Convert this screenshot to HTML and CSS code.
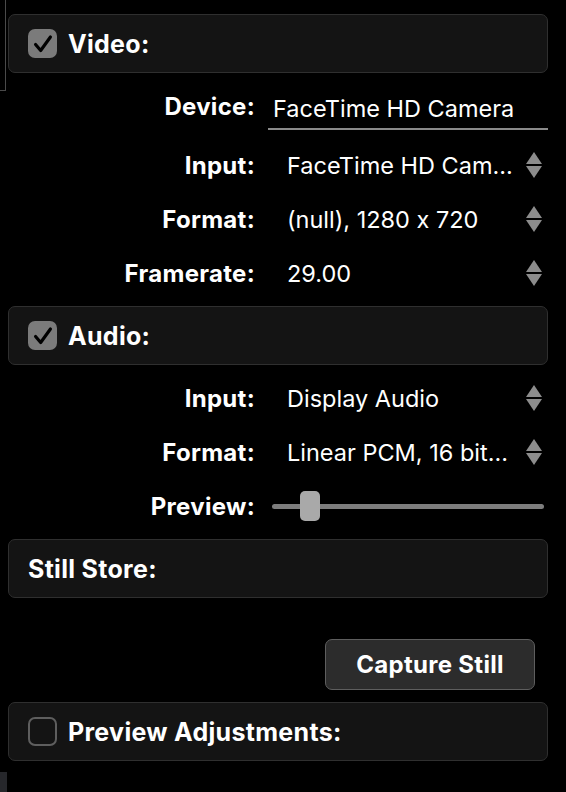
FILE: index.html
```html
<!DOCTYPE html>
<html>
<head>
<meta charset="utf-8">
<link rel="stylesheet" href="styles.css">
</head>
<body>
<div class="page">
  <div class="bracket"></div>
  <div class="tab"></div>

  <div class="group">
    <span class="check on"><svg viewBox="0 0 28 28"><path d="M6 14.5 L11.5 21 L22 6.5" /></svg></span>
    <span class="gtitle">Video:</span>
  </div>

  <div class="rows first">
    <div class="row">
      <div class="label">Device:</div>
      <div class="field">FaceTime HD Camera</div>
    </div>
    <div class="row">
      <div class="label">Input:</div>
      <div class="popup"><span class="val">FaceTime HD Cam...</span><span class="stepper"><i class="up"></i><i class="down"></i></span></div>
    </div>
    <div class="row">
      <div class="label">Format:</div>
      <div class="popup"><span class="val">(null), 1280 x 720</span><span class="stepper"><i class="up"></i><i class="down"></i></span></div>
    </div>
    <div class="row">
      <div class="label">Framerate:</div>
      <div class="popup"><span class="val">29.00</span><span class="stepper"><i class="up"></i><i class="down"></i></span></div>
    </div>
  </div>

  <div class="group">
    <span class="check on"><svg viewBox="0 0 28 28"><path d="M6 14.5 L11.5 21 L22 6.5" /></svg></span>
    <span class="gtitle">Audio:</span>
  </div>

  <div class="rows">
    <div class="row">
      <div class="label">Input:</div>
      <div class="popup"><span class="val">Display Audio</span><span class="stepper"><i class="up"></i><i class="down"></i></span></div>
    </div>
    <div class="row">
      <div class="label">Format:</div>
      <div class="popup"><span class="val">Linear PCM, 16 bit...</span><span class="stepper"><i class="up"></i><i class="down"></i></span></div>
    </div>
    <div class="row">
      <div class="label">Preview:</div>
      <div class="slider"><div class="track"></div><div class="knob"></div></div>
    </div>
  </div>

  <div class="group">
    <span class="gtitle">Still Store:</span>
  </div>

  <div class="btnrow">
    <button class="btn">Capture Still</button>
  </div>

  <div class="group">
    <span class="check"></span>
    <span class="gtitle">Preview Adjustments:</span>
  </div>
</div>
</body>
</html>
```

FILE: styles.css
```css
html, body {
  margin: 0;
  padding: 0;
  background: #000;
}
body {
  width: 566px;
  height: 792px;
  overflow: hidden;
  font-family: Inter, "Liberation Sans", sans-serif;
  font-feature-settings: "calt" 0;
  color: #fff;
}
.page {
  position: relative;
  padding: 14px 18px 0 8px;
  display: flex;
  flex-direction: column;
}
.bracket {
  position: absolute;
  left: 0;
  top: 0;
  width: 5px;
  height: 90px;
  border-right: 1px solid #4a4a4a;
  border-bottom: 1px solid #4a4a4a;
}
.tab {
  position: absolute;
  left: 0;
  top: 772px;
  width: 7px;
  height: 20px;
  background: #26272b;
}
.group {
  height: 57px;
  box-sizing: content-box;
  border: 1px solid #2f2f2f;
  background: #141414;
  border-radius: 7px;
  display: flex;
  align-items: center;
  padding-left: 19px;
  gap: 11px;
}
.check {
  width: 29px;
  height: 29px;
  border-radius: 7px;
  border: 2px solid #5e5e5e;
  box-sizing: border-box;
  display: flex;
  align-items: center;
  justify-content: center;
  flex: none;
}
.check.on {
  background: #7b7b7b;
  border: none;
}
.check svg {
  width: 26px;
  height: 26px;
}
.check svg path {
  fill: none;
  stroke: #000;
  stroke-width: 3.4;
  stroke-linecap: round;
  stroke-linejoin: round;
}
.gtitle {
  font-weight: 700;
  font-size: 25px;
  letter-spacing: 0.3px;
}
.rows {
  display: flex;
  flex-direction: column;
  padding: 6px 0;
}
.rows.first .row:first-child {
  margin-bottom: 5px;
}
.row {
  height: 54px;
  display: flex;
  align-items: center;
}
.label {
  width: 247px;
  text-align: right;
  font-weight: 700;
  font-size: 24px;
  letter-spacing: 0.3px;
  flex: none;
}
.field {
  margin-left: 13px;
  flex: 1;
  height: 44px;
  display: flex;
  align-items: center;
  padding-left: 5px;
  font-size: 23.5px;
  border-bottom: 2px solid #8a8a8a;
  margin-top: 4px;
  box-sizing: border-box;
  padding-top: 2px;
}
.popup {
  margin-left: 32px;
  flex: 1;
  display: flex;
  align-items: center;
  justify-content: space-between;
  font-size: 23.5px;
  padding-right: 6px;
}
.stepper {
  display: flex;
  flex-direction: column;
  gap: 2px;
}
.stepper i {
  display: block;
  width: 0;
  height: 0;
  border-left: 8px solid transparent;
  border-right: 8px solid transparent;
}
.stepper .up {
  border-bottom: 12px solid #8c8c8c;
}
.stepper .down {
  border-top: 12px solid #8c8c8c;
}
.slider {
  position: relative;
  margin-left: 17px;
  flex: 1;
  height: 30px;
  display: flex;
  align-items: center;
  margin-right: 4px;
}
.track {
  flex: 1;
  height: 5px;
  border-radius: 3px;
  background: #7d7d7d;
}
.knob {
  position: absolute;
  left: 28px;
  top: 0;
  width: 20px;
  height: 30px;
  border-radius: 5px;
  background: #a9a9a9;
}
.btnrow {
  display: flex;
  justify-content: flex-end;
  padding: 41px 13px 12px 0;
}
.btn {
  width: 210px;
  height: 51px;
  background: #2c2c2c;
  border: 1.5px solid #5e5e5e;
  border-radius: 7px;
  color: #fff;
  font-family: Inter, "Liberation Sans", sans-serif;
  font-weight: 700;
  font-size: 24px;
  letter-spacing: 0.3px;
  padding: 0;
}
```
